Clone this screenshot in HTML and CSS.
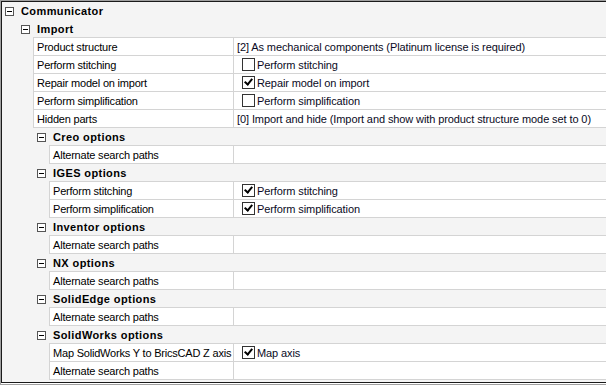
FILE: index.html
```html
<!DOCTYPE html>
<html lang="en">
<head>
    <meta charset="UTF-8">
    <meta name="viewport" content="width=device-width, initial-scale=1.0">
    <title>Communicator</title>
    <link rel="stylesheet" href="styles.css">
</head>
<body>

    <div class="frame">
        <div class="grid">

            <!-- Communicator -->
            <div class="cat lvl0">
                <span class="expander"><svg width="9" height="9" viewBox="0 0 9 9"><rect x="0.5" y="0.5" width="8" height="8" fill="#fff" stroke="#555"/><path d="M2 4.5h5" stroke="#000"/></svg></span>
                <span class="cat-name">Communicator</span>
            </div>

            <!-- Import -->
            <div class="cat lvl1">
                <span class="expander"><svg width="9" height="9" viewBox="0 0 9 9"><rect x="0.5" y="0.5" width="8" height="8" fill="#fff" stroke="#555"/><path d="M2 4.5h5" stroke="#000"/></svg></span>
                <span class="cat-name">Import</span>
            </div>
            <div class="props lvl1">
                <div class="prop">
                    <div class="name">Product structure</div>
                    <div class="value">[2] As mechanical components (Platinum license is required)</div>
                </div>
                <div class="prop">
                    <div class="name">Perform stitching</div>
                    <div class="value"><span class="check"></span>Perform stitching</div>
                </div>
                <div class="prop">
                    <div class="name">Repair model on import</div>
                    <div class="value"><span class="check on"></span>Repair model on import</div>
                </div>
                <div class="prop">
                    <div class="name">Perform simplification</div>
                    <div class="value"><span class="check"></span>Perform simplification</div>
                </div>
                <div class="prop">
                    <div class="name">Hidden parts</div>
                    <div class="value">[0] Import and hide (Import and show with product structure mode set to 0)</div>
                </div>
            </div>

            <!-- Creo -->
            <div class="cat lvl2">
                <span class="expander"><svg width="9" height="9" viewBox="0 0 9 9"><rect x="0.5" y="0.5" width="8" height="8" fill="#fff" stroke="#555"/><path d="M2 4.5h5" stroke="#000"/></svg></span>
                <span class="cat-name">Creo options</span>
            </div>
            <div class="props lvl2">
                <div class="prop">
                    <div class="name">Alternate search paths</div>
                    <div class="value"></div>
                </div>
            </div>

            <!-- IGES -->
            <div class="cat lvl2">
                <span class="expander"><svg width="9" height="9" viewBox="0 0 9 9"><rect x="0.5" y="0.5" width="8" height="8" fill="#fff" stroke="#555"/><path d="M2 4.5h5" stroke="#000"/></svg></span>
                <span class="cat-name">IGES options</span>
            </div>
            <div class="props lvl2">
                <div class="prop">
                    <div class="name">Perform stitching</div>
                    <div class="value"><span class="check on"></span>Perform stitching</div>
                </div>
                <div class="prop">
                    <div class="name">Perform simplification</div>
                    <div class="value"><span class="check on"></span>Perform simplification</div>
                </div>
            </div>

            <!-- Inventor -->
            <div class="cat lvl2">
                <span class="expander"><svg width="9" height="9" viewBox="0 0 9 9"><rect x="0.5" y="0.5" width="8" height="8" fill="#fff" stroke="#555"/><path d="M2 4.5h5" stroke="#000"/></svg></span>
                <span class="cat-name">Inventor options</span>
            </div>
            <div class="props lvl2">
                <div class="prop">
                    <div class="name">Alternate search paths</div>
                    <div class="value"></div>
                </div>
            </div>

            <!-- NX -->
            <div class="cat lvl2">
                <span class="expander"><svg width="9" height="9" viewBox="0 0 9 9"><rect x="0.5" y="0.5" width="8" height="8" fill="#fff" stroke="#555"/><path d="M2 4.5h5" stroke="#000"/></svg></span>
                <span class="cat-name">NX options</span>
            </div>
            <div class="props lvl2">
                <div class="prop">
                    <div class="name">Alternate search paths</div>
                    <div class="value"></div>
                </div>
            </div>

            <!-- SolidEdge -->
            <div class="cat lvl2">
                <span class="expander"><svg width="9" height="9" viewBox="0 0 9 9"><rect x="0.5" y="0.5" width="8" height="8" fill="#fff" stroke="#555"/><path d="M2 4.5h5" stroke="#000"/></svg></span>
                <span class="cat-name">SolidEdge options</span>
            </div>
            <div class="props lvl2">
                <div class="prop">
                    <div class="name">Alternate search paths</div>
                    <div class="value"></div>
                </div>
            </div>

            <!-- SolidWorks -->
            <div class="cat lvl2">
                <span class="expander"><svg width="9" height="9" viewBox="0 0 9 9"><rect x="0.5" y="0.5" width="8" height="8" fill="#fff" stroke="#555"/><path d="M2 4.5h5" stroke="#000"/></svg></span>
                <span class="cat-name">SolidWorks options</span>
            </div>
            <div class="props lvl2">
                <div class="prop">
                    <div class="name">Map SolidWorks Y to BricsCAD Z axis</div>
                    <div class="value"><span class="check on"></span>Map axis</div>
                </div>
                <div class="prop">
                    <div class="name">Alternate search paths</div>
                    <div class="value"></div>
                </div>
            </div>

        </div>
    </div>

</body>
</html>
```

FILE: styles.css
```css
body {
    margin: 0;
    font-family: "Liberation Sans", Arial, sans-serif;
    font-size: 11px;
    color: #000;
    background-color: #fff;
    width: 606px;
    height: 385px;
    overflow: hidden;
}
.frame {
    border-top: 1px solid #a0a0a0;
    border-left: 1px solid #a0a0a0;
    border-bottom: 1px solid #a0a0a0;
    padding-bottom: 1px;
    background-color: #fff;
}
.grid {
    border-top: 1px solid #1a1a1a;
    border-left: 1px solid #1a1a1a;
    border-bottom: 1px solid #1a1a1a;
    background-color: #f4f4f4;
    padding-bottom: 2px;
}
.cat {
    display: flex;
    align-items: center;
    height: 18px;
}
.cat.lvl0 { padding-left: 3px; }
.cat.lvl1 { padding-left: 19px; }
.cat.lvl2 { padding-left: 35px; }
.expander {
    display: flex;
    width: 9px;
    height: 9px;
    margin-right: 7px;
    margin-top: 1px;
}
.cat-name {
    font-weight: bold;
    letter-spacing: 0.4px;
    line-height: 17px;
    padding-top: 1px;
}
.props {
    margin-top: -1px;
    border-top: 1px solid #d4d4d4;
    border-left: 1px solid #d4d4d4;
    background-color: #fff;
}
.props.lvl1 { margin-left: 31px; }
.props.lvl2 { margin-left: 47px; }
.prop {
    display: flex;
    height: 17px;
    border-bottom: 1px solid #d4d4d4;
}
.name {
    padding-left: 3px;
    padding-top: 1px;
    border-right: 1px solid #d4d4d4;
    line-height: 16px;
    letter-spacing: -0.2px;
    white-space: nowrap;
    overflow: hidden;
}
.props.lvl1 .name { width: 196px; }
.props.lvl2 .name { width: 180px; }
.value {
    flex: 1;
    display: flex;
    align-items: center;
    padding-left: 3px;
    padding-top: 1px;
    line-height: 16px;
    letter-spacing: -0.1px;
    white-space: nowrap;
    color: #0a0a24;
}
.check {
    width: 11px;
    height: 11px;
    border: 1px solid #333;
    background-color: #fff;
    margin-left: 5px;
    margin-right: 2px;
    margin-top: -1px;
    position: relative;
}
.check.on::after {
    content: "";
    position: absolute;
    left: 3px;
    top: 0px;
    width: 3px;
    height: 6px;
    border-right: 2px solid #000;
    border-bottom: 2px solid #000;
    transform: rotate(40deg);
}
```
